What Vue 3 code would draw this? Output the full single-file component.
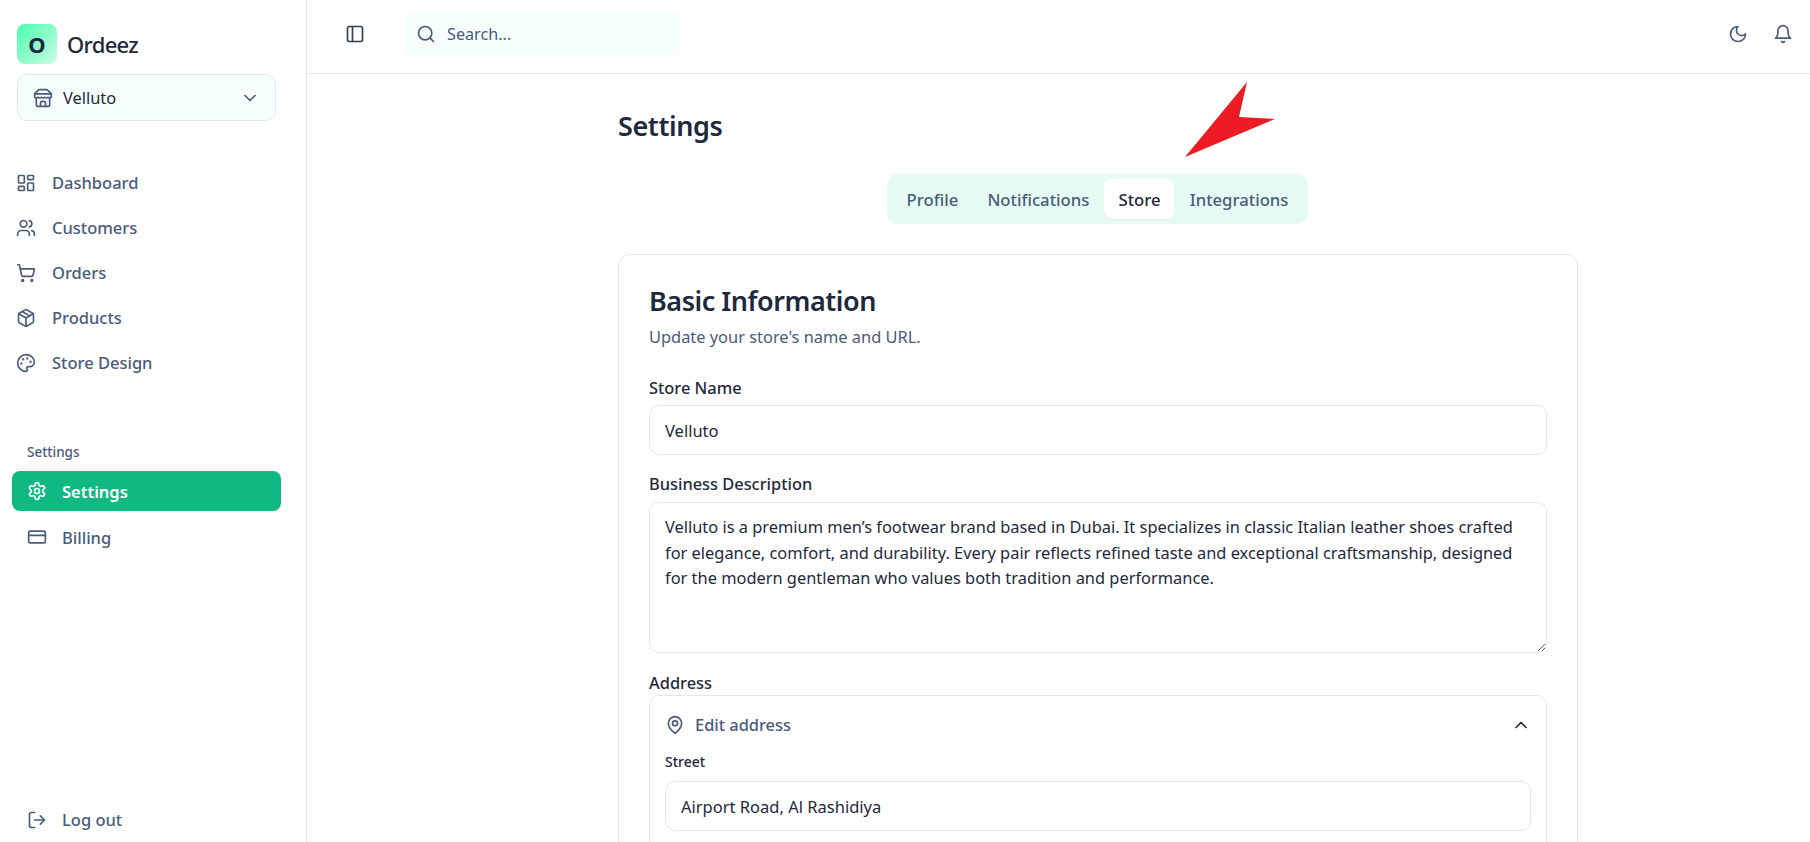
<template>
  <div class="app-shell">
    <aside class="sidebar">
      <div class="brand">
        <div class="brand-logo">O</div>
        <span class="brand-name">Ordeez</span>
      </div>
      <button class="store-select">
        <svg class="icon store-icon" viewBox="0 0 24 24" v-html="icons.store"></svg>
        <span class="store-name">Velluto</span>
        <svg class="icon chevron" viewBox="0 0 24 24" v-html="icons.chevronDown"></svg>
      </button>

      <nav class="main-nav">
        <a v-for="item in mainNav" :key="item.label" class="nav-item">
          <svg class="icon" viewBox="0 0 24 24" v-html="icons[item.icon]"></svg>
          <span>{{ item.label }}</span>
        </a>
      </nav>

      <div class="nav-group-label">Settings</div>
      <nav class="sub-nav">
        <a v-for="item in settingsNav" :key="item.label" class="nav-item" :class="{ active: item.active }">
          <svg class="icon" viewBox="0 0 24 24" v-html="icons[item.icon]"></svg>
          <span>{{ item.label }}</span>
        </a>
      </nav>

      <a class="nav-item logout">
        <svg class="icon" viewBox="0 0 24 24" v-html="icons.logOut"></svg>
        <span>Log out</span>
      </a>
    </aside>

    <div class="main">
      <header class="topbar">
        <svg class="icon panel-icon" viewBox="0 0 24 24" v-html="icons.panelLeft"></svg>
        <div class="search">
          <svg class="icon" viewBox="0 0 24 24" v-html="icons.search"></svg>
          <input type="text" placeholder="Search..." />
        </div>
        <div class="topbar-actions">
          <svg class="icon" viewBox="0 0 24 24" v-html="icons.moon"></svg>
          <svg class="icon" viewBox="0 0 24 24" v-html="icons.bell"></svg>
        </div>
      </header>

      <main class="content">
        <h1 class="page-title">Settings</h1>

        <div class="tabs">
          <button v-for="tab in tabs" :key="tab" class="tab" :class="{ active: tab === activeTab }" @click="activeTab = tab">
            {{ tab }}
          </button>
        </div>

        <section class="card">
          <h2>Basic Information</h2>
          <p class="card-sub">Update your store's name and URL.</p>

          <label class="field-label first">Store Name</label>
          <input class="text-input" type="text" v-model="storeName" />

          <label class="field-label">Business Description</label>
          <textarea class="text-input area" v-model="description"></textarea>

          <label class="field-label address-label">Address</label>
          <div class="address-box">
            <div class="address-head">
              <svg class="icon" viewBox="0 0 24 24" v-html="icons.mapPin"></svg>
              <span>Edit address</span>
              <svg class="icon chevron-up" viewBox="0 0 24 24" v-html="icons.chevronUp"></svg>
            </div>
            <label class="small-label">Street</label>
            <input class="text-input" type="text" v-model="street" />
          </div>
        </section>
      </main>

      <!-- red annotation arrow on top of the screenshot -->
      <svg class="annotation" width="100" height="85" viewBox="0 0 100 85">
        <polygon points="67,2 59,37 95,39 5,77" fill="#ed1c24" />
      </svg>
    </div>
  </div>
</template>

<script setup>
import { ref } from 'vue';

const icons = {
  store: '<path d="m2 7 4.41-4.41A2 2 0 0 1 7.83 2h8.34a2 2 0 0 1 1.42.59L22 7"/><path d="M4 12v8a2 2 0 0 0 2 2h12a2 2 0 0 0 2-2v-8"/><path d="M15 22v-4a2 2 0 0 0-2-2h-2a2 2 0 0 0-2 2v4"/><path d="M2 7h20"/><path d="M22 7v3a2 2 0 0 1-2 2a2.7 2.7 0 0 1-1.59-.63.7.7 0 0 0-.82 0A2.7 2.7 0 0 1 16 12a2.7 2.7 0 0 1-1.59-.63.7.7 0 0 0-.82 0A2.7 2.7 0 0 1 12 12a2.7 2.7 0 0 1-1.59-.63.7.7 0 0 0-.82 0A2.7 2.7 0 0 1 8 12a2.7 2.7 0 0 1-1.59-.63.7.7 0 0 0-.82 0A2.7 2.7 0 0 1 4 12a2 2 0 0 1-2-2V7"/>',
  chevronDown: '<path d="m6 9 6 6 6-6"/>',
  chevronUp: '<path d="m18 15-6-6-6 6"/>',
  dashboard: '<rect x="3" y="3" width="7" height="9" rx="1"/><rect x="14" y="3" width="7" height="5" rx="1"/><rect x="14" y="12" width="7" height="9" rx="1"/><rect x="3" y="16" width="7" height="5" rx="1"/>',
  users: '<path d="M16 21v-2a4 4 0 0 0-4-4H6a4 4 0 0 0-4 4v2"/><circle cx="9" cy="7" r="4"/><path d="M22 21v-2a4 4 0 0 0-3-3.87"/><path d="M16 3.13a4 4 0 0 1 0 7.75"/>',
  cart: '<circle cx="8" cy="21" r="1"/><circle cx="19" cy="21" r="1"/><path d="M2.05 2.05h2l2.66 12.42a2 2 0 0 0 2 1.58h9.78a2 2 0 0 0 1.95-1.57l1.65-7.43H5.12"/>',
  box: '<path d="m7.5 4.27 9 5.15"/><path d="M21 8a2 2 0 0 0-1-1.73l-7-4a2 2 0 0 0-2 0l-7 4A2 2 0 0 0 3 8v8a2 2 0 0 0 1 1.73l7 4a2 2 0 0 0 2 0l7-4A2 2 0 0 0 21 16Z"/><path d="m3.3 7 8.7 5 8.7-5"/><path d="M12 22V12"/>',
  palette: '<circle cx="13.5" cy="6.5" r=".5" fill="currentColor"/><circle cx="17.5" cy="10.5" r=".5" fill="currentColor"/><circle cx="8.5" cy="7.5" r=".5" fill="currentColor"/><circle cx="6.5" cy="12.5" r=".5" fill="currentColor"/><path d="M12 2C6.5 2 2 6.5 2 12s4.5 10 10 10c.926 0 1.648-.746 1.648-1.688 0-.437-.18-.835-.437-1.125-.29-.289-.438-.652-.438-1.125a1.64 1.64 0 0 1 1.668-1.668h1.996c3.051 0 5.555-2.503 5.555-5.554C21.965 6.012 17.461 2 12 2z"/>',
  settings: '<path d="M12.22 2h-.44a2 2 0 0 0-2 2v.18a2 2 0 0 1-1 1.73l-.43.25a2 2 0 0 1-2 0l-.15-.08a2 2 0 0 0-2.73.73l-.22.38a2 2 0 0 0 .73 2.73l.15.1a2 2 0 0 1 1 1.72v.51a2 2 0 0 1-1 1.74l-.15.09a2 2 0 0 0-.73 2.73l.22.38a2 2 0 0 0 2.73.73l.15-.08a2 2 0 0 1 2 0l.43.25a2 2 0 0 1 1 1.73V20a2 2 0 0 0 2 2h.44a2 2 0 0 0 2-2v-.18a2 2 0 0 1 1-1.73l.43-.25a2 2 0 0 1 2 0l.15.08a2 2 0 0 0 2.73-.73l.22-.39a2 2 0 0 0-.73-2.73l-.15-.08a2 2 0 0 1-1-1.74v-.5a2 2 0 0 1 1-1.74l.15-.09a2 2 0 0 0 .73-2.73l-.22-.38a2 2 0 0 0-2.73-.73l-.15.08a2 2 0 0 1-2 0l-.43-.25a2 2 0 0 1-1-1.73V4a2 2 0 0 0-2-2z"/><circle cx="12" cy="12" r="3"/>',
  card: '<rect x="2" y="5" width="20" height="14" rx="2"/><line x1="2" y1="10" x2="22" y2="10"/>',
  logOut: '<path d="M9 21H5a2 2 0 0 1-2-2V5a2 2 0 0 1 2-2h4"/><polyline points="16 17 21 12 16 7"/><line x1="21" y1="12" x2="9" y2="12"/>',
  panelLeft: '<rect x="3" y="3" width="18" height="18" rx="2"/><path d="M9 3v18"/>',
  search: '<circle cx="11" cy="11" r="8"/><path d="m21 21-4.3-4.3"/>',
  moon: '<path d="M12 3a6 6 0 0 0 9 9 9 9 0 1 1-9-9Z"/>',
  bell: '<path d="M6 8a6 6 0 0 1 12 0c0 7 3 9 3 9H3s3-2 3-9"/><path d="M10.3 21a1.94 1.94 0 0 0 3.4 0"/>',
  mapPin: '<path d="M20 10c0 6-8 12-8 12s-8-6-8-12a8 8 0 0 1 16 0Z"/><circle cx="12" cy="10" r="3"/>'
};

const mainNav = [
  { label: 'Dashboard', icon: 'dashboard' },
  { label: 'Customers', icon: 'users' },
  { label: 'Orders', icon: 'cart' },
  { label: 'Products', icon: 'box' },
  { label: 'Store Design', icon: 'palette' }
];

const settingsNav = [
  { label: 'Settings', icon: 'settings', active: true },
  { label: 'Billing', icon: 'card' }
];

const tabs = ['Profile', 'Notifications', 'Store', 'Integrations'];
const activeTab = ref('Store');

const storeName = ref('Velluto');
const description = ref("Velluto is a premium men’s footwear brand based in Dubai. It specializes in classic Italian leather shoes crafted for elegance, comfort, and durability. Every pair reflects refined taste and exceptional craftsmanship, designed for the modern gentleman who values both tradition and performance.");
const street = ref('Airport Road, Al Rashidiya');
</script>

<style>
html, body {
  margin: 0;
  height: 100%;
  overflow: hidden;
  background: #fff;
}
</style>

<style scoped>
.app-shell {
  display: flex;
  height: 842px;
  overflow: hidden;
  font-family: "Noto Sans", "Open Sans", sans-serif;
  color: #1e293b;
  background: #fff;
}

.icon {
  width: 20px;
  height: 20px;
  flex-shrink: 0;
  fill: none;
  stroke: currentColor;
  stroke-width: 2;
  stroke-linecap: round;
  stroke-linejoin: round;
}

/* Sidebar */
.sidebar {
  width: 306px;
  flex-shrink: 0;
  border-right: 1px solid #e5e7eb;
  display: flex;
  flex-direction: column;
  box-sizing: content-box;
}
.brand {
  display: flex;
  align-items: center;
  gap: 10px;
  padding: 24px 0 0 17px;
}
.brand-logo {
  width: 40px;
  height: 40px;
  border-radius: 8px;
  background: linear-gradient(135deg, #4dfbae, #c8fde5);
  display: flex;
  align-items: center;
  justify-content: center;
  font-size: 22px;
  font-weight: 700;
}
.brand-name {
  font-size: 22px;
  font-weight: 500;
  letter-spacing: -0.7px;
}
.store-select {
  margin: 10px 0 0 17px;
  width: 259px;
  height: 47px;
  display: flex;
  align-items: center;
  padding: 0 15px;
  border: 1px solid #e2e8f0;
  border-radius: 10px;
  background: #f7fffc;
  font: inherit;
  color: #1e293b;
  box-sizing: border-box;
}
.store-icon {
  color: #4a5b7a;
}
.store-name {
  margin-left: 10px;
  font-size: 16.4px;
}
.chevron {
  margin-left: auto;
  color: #4a5b7a;
}
.main-nav {
  margin-top: 39px;
  padding: 0 0 0 16px;
}
.nav-item {
  height: 45px;
  display: flex;
  align-items: center;
  gap: 16px;
  font-size: 16.5px;
  font-weight: 500;
  color: #4a5b7a;
}
.nav-group-label {
  margin: 58px 0 0 27px;
  font-size: 13.5px;
  font-weight: 500;
  color: #4a5b7a;
}
.sub-nav {
  margin: 10px 25px 0 12px;
}
.sub-nav .nav-item {
  padding-left: 15px;
  gap: 15px;
  height: 40px;
  margin-bottom: 6px;
  border-radius: 8px;
}
.sub-nav .nav-item.active {
  background: #10b981;
  color: #fff;
  font-weight: 600;
}
.logout {
  margin-top: auto;
  padding-left: 27px;
  gap: 15px;
}

/* Top bar */
.main {
  flex: 1;
  position: relative;
  min-width: 0;
  overflow: hidden;
}
.topbar {
  height: 67px;
  border-bottom: 1px solid #e5e7eb;
  display: flex;
  align-items: center;
  padding: 0 17px 6px 38px;
}
.panel-icon {
  color: #334155;
}
.search {
  margin-left: 37px;
  width: 280px;
  height: 45px;
  background: #f7fffc;
  border-radius: 10px;
  display: flex;
  align-items: center;
  padding-left: 14px;
  gap: 11px;
  box-sizing: border-box;
  color: #4a5b7a;
}
.search input {
  border: 0;
  outline: 0;
  background: transparent;
  font: inherit;
  font-size: 16.2px;
  width: 200px;
  padding: 0;
}
.search input::placeholder {
  color: #4a5b7a;
  opacity: 1;
}
.topbar-actions {
  margin-left: auto;
  display: flex;
  gap: 25px;
  color: #4a5b7a;
}

/* Page */
.content {
  width: 960px;
  margin-left: 311px;
}
.page-title {
  margin: 33px 0 0;
  font-size: 27px;
  line-height: 38px;
  font-weight: 600;
  letter-spacing: -0.4px;
}
.tabs {
  display: flex;
  width: fit-content;
  margin: 29px 0 0 269px;
  padding: 5px;
  background: #e6fbf4;
  border-radius: 10px;
}
.tab {
  height: 40px;
  border: 0;
  background: transparent;
  padding: 0 14.6px;
  font: inherit;
  font-size: 16.7px;
  font-weight: 500;
  color: #4a5b7a;
  border-radius: 8px;
}
.tab.active {
  background: #fff;
  color: #1e293b;
  box-shadow: 0 1px 2px rgba(0, 0, 0, 0.06);
}
.card {
  margin-top: 30px;
  border: 1px solid #e2e8f0;
  border-radius: 12px;
  padding: 27px 30px 30px;
}
.card h2 {
  margin: 0;
  font-size: 27px;
  line-height: 38px;
  font-weight: 600;
  letter-spacing: -0.47px;
}
.card-sub {
  margin: 5px 0 0;
  font-size: 16.4px;
  line-height: 24px;
  color: #4a5b7a;
}
.field-label {
  display: block;
  margin: 17px 0 6px;
  font-size: 16.4px;
  line-height: 24px;
  font-weight: 500;
}
.field-label.first {
  margin: 27px 0 5px;
}
.field-label.address-label {
  margin: 18px 0 0;
}
.text-input {
  display: block;
  width: 100%;
  height: 50px;
  box-sizing: border-box;
  border: 1px solid #e2e8f0;
  border-radius: 10px;
  padding: 0 15px;
  font: inherit;
  font-size: 16.5px;
  color: #1e293b;
  outline: 0;
  background: #fff;
}
.text-input.area {
  height: 151px;
  padding: 11px 15px;
  font-size: 16.4px;
  line-height: 25.6px;
  resize: vertical;
}
.address-box {
  border: 1px solid #e2e8f0;
  border-radius: 10px;
  padding: 0 15px;
  height: 200px;
}
.address-head {
  height: 57px;
  display: flex;
  align-items: center;
  gap: 10px;
  font-size: 16.4px;
  font-weight: 500;
  color: #4a5b7a;
}
.chevron-up {
  margin-left: auto;
  color: #1e293b;
}
.small-label {
  display: block;
  font-size: 14px;
  line-height: 18px;
  font-weight: 500;
  margin-bottom: 10px;
}

.annotation {
  position: absolute;
  left: 873px;
  top: 80px;
}
</style>
